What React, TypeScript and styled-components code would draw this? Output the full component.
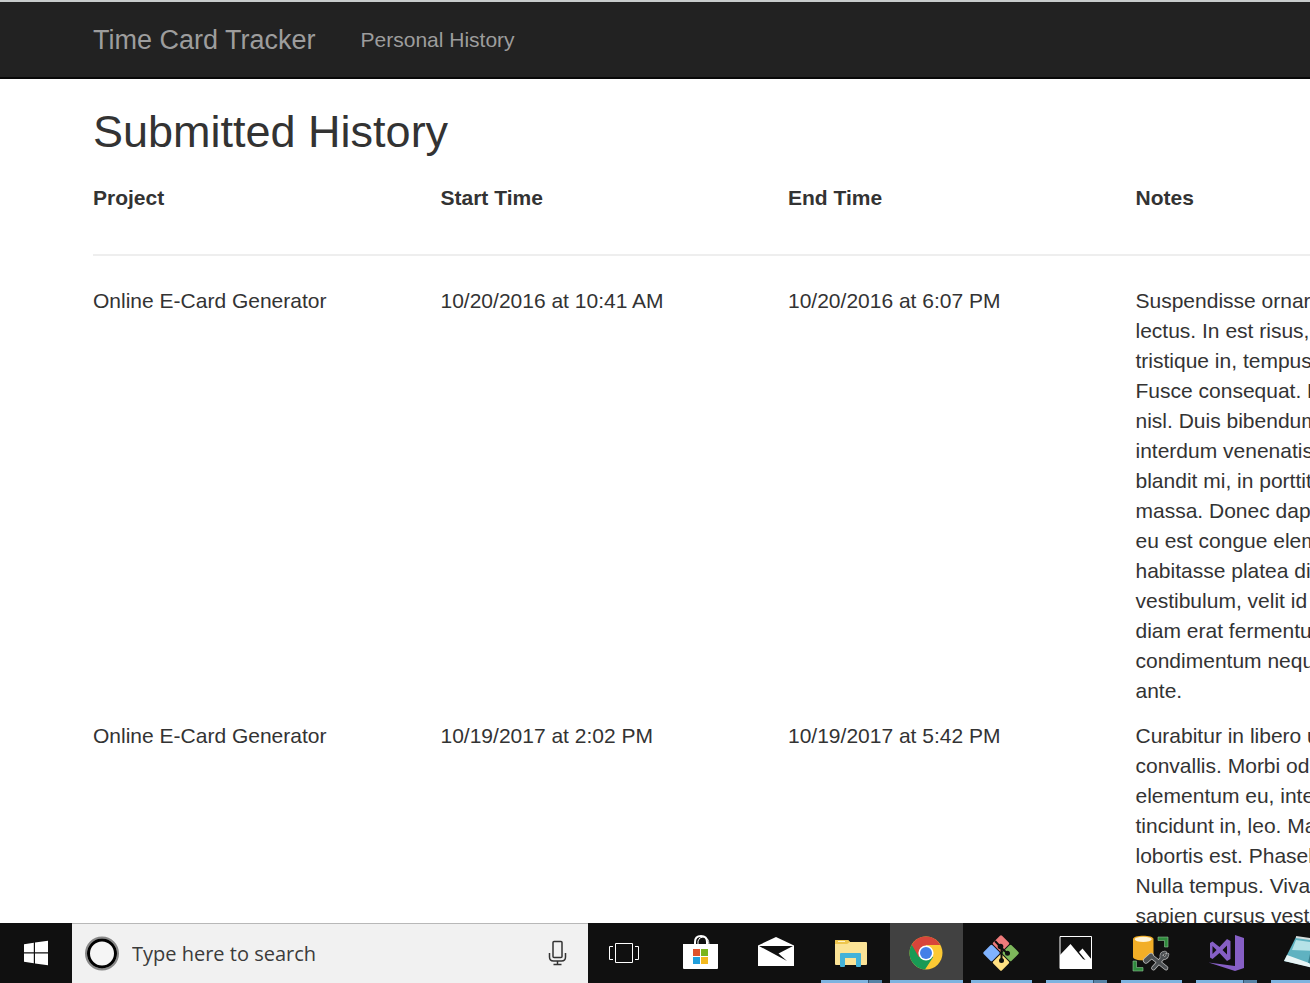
import React from "react";
import styled, { createGlobalStyle } from "styled-components";

const GlobalStyle = createGlobalStyle`
  * { box-sizing: border-box; }
  body {
    margin: 0;
    background: #fff;
    color: #333;
    font-family: "Liberation Sans", Arial, sans-serif;
    font-size: 21px;
    line-height: 30px;
  }
`;

const Desktop = styled.div`
  display: flex;
  flex-direction: column;
  height: 100vh;
  overflow: hidden;
`;

const BrowserView = styled.div`
  flex: 1;
  min-height: 0;
  overflow: hidden;
  border-top: 2px solid #c8cccc;
`;

const Navbar = styled.nav`
  display: flex;
  align-items: center;
  gap: 45px;
  height: 77px;
  padding: 0 93px;
  background: #222;
  border-bottom: 2px solid #080808;
`;

const NavLink = styled.a<{ $brand?: boolean }>`
  color: #9d9d9d;
  font-size: ${(p) => (p.$brand ? 27 : 21)}px;
  text-decoration: none;
  white-space: nowrap;
`;

const Content = styled.main`
  padding: 28px 93px 0;
`;

const Title = styled.h2`
  margin: 0 0 26px;
  font-size: 45px;
  font-weight: 400;
  line-height: 50px;
`;

const HistoryTable = styled.table`
  width: 100%;
  min-width: 1390px;
  table-layout: fixed;
  border-collapse: separate;
  border-spacing: 0;
`;

const HeadCell = styled.th`
  padding: 0 0 41px;
  border-bottom: 2px solid #eee;
  text-align: left;
`;

const Row = styled.tr`
  &:first-child > td {
    padding-top: 30px;
  }
`;

const Cell = styled.td`
  padding: 0 0 15px;
  vertical-align: top;
  white-space: pre;
`;

const Taskbar = styled.footer`
  display: flex;
  flex: none;
  height: 60px;
  background: #101010;
`;

const StartButton = styled.button`
  flex: none;
  width: 72px;
  padding: 0;
  border: 0;
  background: none;
`;

const SearchBox = styled.label`
  display: flex;
  flex: none;
  align-items: center;
  width: 516px;
  padding: 0 20px 0 12px;
  border-top: 1px solid #b8b8b8;
  background: #f1f1f1;
`;

const SearchInput = styled.input`
  flex: 1;
  min-width: 0;
  margin-left: 12px;
  padding: 0;
  border: 0;
  outline: 0;
  background: none;
  font: 20px/30px "Open Sans", "Noto Sans", sans-serif;
  &::placeholder {
    color: #3b3b3b;
    opacity: 1;
  }
`;

const Apps = styled.div`
  display: flex;
  gap: 2px;
  padding-left: 2px;
`;

type Mark = "none" | "single" | "stacked" | "active";

const marks: Record<Mark, string> = {
  none: "none",
  single: "linear-gradient(#7eb3df, #7eb3df)",
  active: "linear-gradient(#7eb3df, #7eb3df)",
  stacked: "linear-gradient(90deg, #7eb3df 47px, #35546d 47px, #35546d 48px, #5682a5 48px)",
};

const AppButton = styled.button<{ $mark: Mark }>`
  flex: none;
  width: 73px;
  height: 60px;
  padding: 0;
  border: 0;
  background-color: ${(p) => (p.$mark === "active" ? "#414141" : "transparent")};
  background-image: ${(p) => marks[p.$mark]};
  background-position: center bottom;
  background-repeat: no-repeat;
  background-size: ${(p) => (p.$mark === "active" ? 73 : 61)}px 3px;
`;

const Icon = styled.svg`
  display: block;
  flex: none;
`;

const rows = [
  {
    project: "Online E-Card Generator",
    start: "10/20/2016 at 10:41 AM",
    end: "10/20/2016 at 6:07 PM",
    notes: `Suspendisse ornare consequat
lectus. In est risus, auctor sed,
tristique in, tempus sit amet, sem.
Fusce consequat. Nulla nisl. Nunc
nisl. Duis bibendum, felis sed
interdum venenatis, turpis enim
blandit mi, in porttitor pede justo eu
massa. Donec dapibus. Duis at velit
eu est congue elementum. In hac
habitasse platea dictumst. Morbi
vestibulum, velit id pretium iaculis,
diam erat fermentum justo, nec
condimentum neque sapien placerat
ante.`,
  },
  {
    project: "Online E-Card Generator",
    start: "10/19/2017 at 2:02 PM",
    end: "10/19/2017 at 5:42 PM",
    notes: `Curabitur in libero ut massa volutpat
convallis. Morbi odio odio,
elementum eu, interdum eu,
tincidunt in, leo. Maecenas pulvinar
lobortis est. Phasellus sit amet erat.
Nulla tempus. Vivamus in felis eu
sapien cursus vestibulum.`,
  },
];

const apps: { name: string; mark: Mark; art: React.ReactNode }[] = [
  {
    name: "Task View",
    mark: "none",
    art: (
      <g fill="none" stroke="#fff">
        <path d="M25.5 20.5H42.5V39.5H25.5Z" />
        <path d="M23 23.5H19.5V36.5H23M45 23.5H48.5V36.5H45" />
      </g>
    ),
  },
  {
    name: "Microsoft Store",
    mark: "none",
    art: (
      <>
        <path d="M30 22V19Q30 13 36 13T42 19V22" fill="none" stroke="#fff" strokeWidth="2" />
        <path d="M33 22V18Q34 14 38 14Q44 14 44 22" fill="none" stroke="#fff" strokeWidth="1" />
        <path d="M18 21H53V45Q53 46 52 46H19Q18 46 18 45Z" fill="#fff" />
        <path d="M28 26H35V33H28Z" fill="#e0532b" />
        <path d="M36 26H43V33H36Z" fill="#79b51c" />
        <path d="M28 34H35V41H28Z" fill="#219fdc" />
        <path d="M36 34H43V41H36Z" fill="#f3b91d" />
      </>
    ),
  },
  {
    name: "Mail",
    mark: "none",
    art: (
      <>
        <path d="M18 22.500L36 14L54 22.500V43H18Z" fill="#fff" />
        <path d="M19 23H53L38.500 30.500L47 38Z" fill="#101010" />
      </>
    ),
  },
  {
    name: "File Explorer",
    mark: "stacked",
    art: (
      <>
        <path d="M20 18Q20 17 21 17H33L35 19H51Q52 19 52 20V41Q52 42 51 42H21Q20 42 20 41Z" fill="#fbe396" />
        <path d="M20 18Q20 17 21 17H33L35 19L32 21H20Z" fill="#eec64f" />
        <path d="M23 18.500H30" stroke="#fff3c6" />
        <path d="M25 31Q25 30 26 30H45Q46 30 46 31V43Q46 44 45 44H42Q41 44 41 43V35H30V43Q30 44 29 44H26Q25 44 25 43Z" fill="#43b2d9" />
      </>
    ),
  },
  {
    name: "Google Chrome",
    mark: "active",
    art: (
      <>
        <circle cx="36" cy="30" r="16.500" fill="#fcc934" />
        <path d="M36 30L21.700 21.700A16.500 16.500 0 0 0 35 46.500L43.200 34Z" fill="#189a55" />
        <path d="M36 30L28.800 34L21.700 21.700A16.500 16.500 0 0 1 50.400 22H36Z" fill="#d8453a" />
        <circle cx="36" cy="30" r="7.600" fill="#fff" />
        <circle cx="36" cy="30" r="6" fill="#427fe8" />
      </>
    ),
  },
  {
    name: "Git Bash",
    mark: "single",
    art: (
      <>
        <g transform="rotate(45 36 30)">
          <rect x="23" y="17" width="12.500" height="12.500" rx="1.500" fill="#ee7b7b" />
          <rect x="36.500" y="17" width="12.500" height="12.500" rx="1.500" fill="#7db75b" />
          <rect x="23" y="30.500" width="12.500" height="12.500" rx="1.500" fill="#80b3ff" />
          <rect x="36.500" y="30.500" width="12.500" height="12.500" rx="1.500" fill="#ffe082" />
        </g>
        <g fill="#101010">
          <path d="M30 18L36.500 25V37M36.500 25L42.500 30.500" stroke="#101010" strokeWidth="2" fill="none" />
          <circle cx="35.500" cy="23.500" r="2.800" />
          <circle cx="36.500" cy="37.500" r="2.500" />
          <circle cx="42.500" cy="30.300" r="2.500" />
        </g>
      </>
    ),
  },
  {
    name: "Photos",
    mark: "stacked",
    art: (
      <>
        <path d="M20 13.500H51.500V45.500H20Z" fill="none" stroke="#fff" />
        <path d="M20 32L30.500 21L43 36L45.500 37L39 29L42.500 25.500L52 37V46H20Z" fill="#fff" />
      </>
    ),
  },
  {
    name: "SQL Server Management Studio",
    mark: "single",
    art: (
      <>
        <path d="M18 16C18 11.500 38.500 11.500 38.500 16V34C38.500 38.500 18 38.500 18 34Z" fill="#f2ae27" />
        <ellipse cx="28.200" cy="16.300" rx="8.500" ry="2.600" fill="#fff3d5" />
        <path d="M43 14H53V24H49.500V17.500H43Z M18 38H21.500V44.500H28V48H18Z" fill="#2f8a3d" stroke="#8fc093" strokeWidth="0.600" />
        <g fill="none" strokeLinecap="round">
          <g stroke="#c0c0c0">
            <path d="M38.500 45L48 34.500M36 33L51 45" strokeWidth="4.600" />
            <path d="M31 37.500L36 33" strokeWidth="6" />
            <path d="M50 29.500Q45.500 30 46.500 34.500Q51.500 36.500 52.500 31.500" strokeWidth="3.600" />
          </g>
          <g stroke="#4d5154">
            <path d="M38.500 45L48 34.500M36 33L51 45" strokeWidth="3.200" />
            <path d="M31 37.500L36 33" strokeWidth="4.600" />
            <path d="M50 29.500Q45.500 30 46.500 34.500Q51.500 36.500 52.500 31.500" strokeWidth="2.400" />
          </g>
        </g>
      </>
    ),
  },
  {
    name: "Visual Studio",
    mark: "stacked",
    art: (
      <>
        <path d="M45 12L54 15V45L45 48L18.500 39.500L45 43Z" fill="#865fc5" />
        <path
          fillRule="evenodd"
          d="M20 20L22.500 18.500L29.500 24L37 16L40.500 18V36L37 38L29.500 30L22.500 36L20 34.500ZM22.500 23V31L26.500 27ZM32.500 27L37 31.500V22.500Z"
          fill="#865fc5"
        />
      </>
    ),
  },
  {
    name: "Notepad",
    mark: "single",
    art: (
      <>
        <path d="M31 14L58 18L51 45L19 38Z" fill="#5fb2c1" />
        <path d="M31 17L58 21L54 28L27 27Z" fill="#b5e2e7" />
        <path d="M19 38L22 32L44 40L48 45Z" fill="#e8f4f5" />
        <path d="M44 40L49 18" stroke="#377e8d" strokeWidth="2" />
        <path d="M31 14L58 18" stroke="#d5dddd" strokeWidth="2" />
      </>
    ),
  },
];

export default function App() {
  return (
    <Desktop>
      <GlobalStyle />
      <BrowserView>
        <Navbar>
          <NavLink $brand href="#home">Time Card Tracker</NavLink>
          <NavLink href="#history">Personal History</NavLink>
        </Navbar>
        <Content>
          <Title>Submitted History</Title>
          <HistoryTable>
            <thead>
              <tr>
                {["Project", "Start Time", "End Time", "Notes"].map((label) => (
                  <HeadCell key={label} scope="col">{label}</HeadCell>
                ))}
              </tr>
            </thead>
            <tbody>
              {rows.map((row) => (
                <Row key={row.start}>
                  <Cell>{row.project}</Cell>
                  <Cell>{row.start}</Cell>
                  <Cell>{row.end}</Cell>
                  <Cell>{row.notes}</Cell>
                </Row>
              ))}
            </tbody>
          </HistoryTable>
        </Content>
      </BrowserView>
      <Taskbar>
        <StartButton aria-label="Start">
          <Icon width="72" height="60" viewBox="0 0 72 60">
            <path
              d="M24 21.300L33.800 19.800V29.300H24ZM35 19.600L48 17.700V29.300H35ZM24 30.500H33.800V40.200L24 38.700ZM35 30.500H48V42.300L35 40.400Z"
              fill="#fff"
            />
          </Icon>
        </StartButton>
        <SearchBox>
          <Icon width="36" height="36" viewBox="0 0 36 36" aria-hidden="true">
            <circle cx="18" cy="17.500" r="16" fill="none" stroke="#888" strokeWidth="2" />
            <circle cx="18" cy="17.500" r="13.500" fill="#f5f5f5" stroke="#000" strokeWidth="3" />
          </Icon>
          <SearchInput type="text" aria-label="Search" placeholder="Type here to search" />
          <Icon width="20" height="28" viewBox="0 0 20 28" aria-hidden="true">
            <g fill="none" stroke="#333" strokeWidth="1.500">
              <rect x="5" y="1.500" width="9" height="16" rx="1" />
              <path d="M1.500 13V17Q1.500 21 5.500 21H13.500Q17.500 21 17.500 17V13M9.500 21V24M5.500 24.500H13.500" />
            </g>
          </Icon>
        </SearchBox>
        <Apps>
          {apps.map((app) => (
            <AppButton key={app.name} $mark={app.mark} aria-label={app.name}>
              <Icon width="73" height="60" viewBox="0 0 73 60">{app.art}</Icon>
            </AppButton>
          ))}
        </Apps>
      </Taskbar>
    </Desktop>
  );
}
